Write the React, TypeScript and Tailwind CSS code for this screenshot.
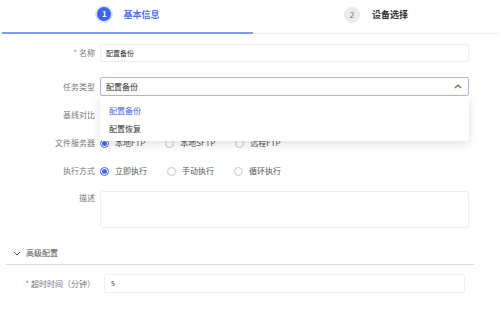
import type { FC } from "react";

const font = { fontFamily: '"Noto Sans CJK SC", "Noto Sans", sans-serif' };

type RadioProps = { label: string; checked?: boolean };

const Radio: FC<RadioProps> = ({ label, checked }) => (
  <div className="flex items-center gap-[6px]">
    <span
      className={
        checked
          ? "flex h-[9px] w-[9px] items-center justify-center rounded-full border border-[#3d6bf5]"
          : "h-[9px] w-[9px] rounded-full border border-[#c4c7cf]"
      }
    >
      {checked && <span className="h-[5px] w-[5px] rounded-full bg-[#3d6bf5]" />}
    </span>
    <span className="text-[8px] leading-none text-[#555]">{label}</span>
  </div>
);

const Label: FC<{ text: string; required?: boolean; top?: boolean }> = ({
  text,
  required,
  top,
}) => (
  <div
    className={
      top
        ? "flex w-[100px] shrink-0 justify-end pr-[5px] pt-[3px] text-[8px] leading-none text-[#777]"
        : "flex w-[100px] shrink-0 items-center justify-end pr-[5px] text-[8px] leading-none text-[#777]"
    }
  >
    {required && <span className="mr-[2px] text-[#6b8cf5]">*</span>}
    {text}
  </div>
);

export default function App() {
  return (
    <div className="h-[309px] w-[501px] overflow-hidden bg-white" style={font}>
      {/* steps */}
      <div className="flex h-[34px] px-[2px]">
        <div className="flex w-[251px] items-center justify-center gap-[10px] border-b-2 border-[#7c9bf7] pb-[4px]">
          <div className="flex h-[18px] w-[18px] items-center justify-center rounded-full bg-[#dbe4fd]">
            <div className="flex h-[14px] w-[14px] items-center justify-center rounded-full bg-[#3d64f0] text-[8px] font-bold leading-none text-white">
              1
            </div>
          </div>
          <span className="text-[9px] font-semibold leading-none text-[#4d6ff5]">
            基本信息
          </span>
        </div>
        <div className="flex flex-1 items-center justify-center gap-[12px] border-b border-[#eceef3] pb-[4px]">
          <div className="flex h-[16px] w-[16px] items-center justify-center rounded-full bg-[#ebebeb] text-[8px] leading-none text-[#777]">
            2
          </div>
          <span className="text-[9px] font-semibold leading-none text-[#333]">
            设备选择
          </span>
        </div>
      </div>

      {/* form */}
      <div className="pt-[10px]">
        <div className="flex h-[18px]">
          <Label text="名称" required />
          <div className="flex w-[369px] items-center rounded-[2px] border border-[#eceef2] px-[5px] text-[7px] leading-none text-[#333]">
            配置备份
          </div>
        </div>

        <div className="relative mt-[15px] flex h-[19px]">
          <Label text="任务类型" />
          <div className="flex w-[369px] items-center justify-between rounded-[2px] border border-[#a9b8fb] px-[5px] text-[8px] leading-none text-[#333]">
            配置备份
            <svg width="8" height="5" viewBox="0 0 8 5" className="mr-[1px]">
              <path d="M1 4 L4 1 L7 4" fill="none" stroke="#666" strokeWidth="1.2" />
            </svg>
          </div>
          <div className="absolute left-[100px] top-[19px] z-10 w-[369px] rounded-b-[3px] bg-white pb-[3px] pt-[6px] shadow-[0_3px_10px_rgba(0,0,0,0.12)]">
            <div className="flex h-[18px] items-center px-[9px] text-[8px] leading-none text-[#3d6bf5]">
              配置备份
            </div>
            <div className="flex h-[18px] items-center px-[9px] text-[8px] leading-none text-[#333]">
              配置恢复
            </div>
          </div>
        </div>

        <div className="mt-[10px] flex h-[18px]">
          <Label text="基线对比" />
        </div>

        <div className="mt-[10px] flex h-[18px]">
          <Label text="文件服务器" />
          <div className="flex items-center gap-[20px]">
            <Radio label="本地FTP" checked />
            <Radio label="本地SFTP" />
            <Radio label="远程FTP" />
          </div>
        </div>

        <div className="mt-[10px] flex h-[18px]">
          <Label text="执行方式" />
          <div className="flex items-center gap-[20px]">
            <Radio label="立即执行" checked />
            <Radio label="手动执行" />
            <Radio label="循环执行" />
          </div>
        </div>

        <div className="mt-[11px] flex h-[37px]">
          <Label text="描述" top />
          <div className="w-[369px] rounded-[3px] border border-[#eceef2]" />
        </div>
      </div>

      {/* advanced */}
      <div className="ml-[6px] mt-[18px] flex h-[19px] w-[468px] items-center gap-[5px] border-b border-[#d9dce3] pb-[4px] pl-[7px]">
        <svg width="8" height="5" viewBox="0 0 8 5">
          <path d="M1 1 L4 4 L7 1" fill="none" stroke="#555" strokeWidth="1" />
        </svg>
        <span className="text-[8px] leading-none text-[#555]">高级配置</span>
      </div>

      <div className="mt-[9px] flex h-[19px]">
        <div className="flex w-[104px] shrink-0 items-center justify-end pr-[9px] text-[8px] leading-none text-[#777]">
          <span className="mr-[2px] text-[#6b8cf5]">*</span>
          超时时间（分钟）
        </div>
        <div className="flex w-[361px] items-center rounded-[3px] border border-[#eceef2] px-[6px] text-[7px] leading-none text-[#333]">
          5
        </div>
      </div>
    </div>
  );
}
